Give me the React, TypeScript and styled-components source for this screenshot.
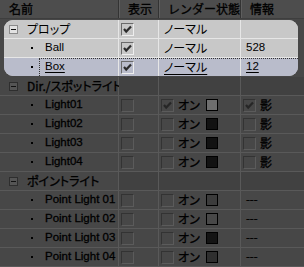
import styled, { createGlobalStyle } from 'styled-components';

const GlobalStyle = createGlobalStyle`
  html, body { margin: 0; padding: 0; background: #474747; }
  body {
    font-family: "Noto Sans CJK JP", "Liberation Sans", sans-serif;
    font-size: 11px;
    color: #000;
  }
`;

type Tone = 'light' | 'selected' | 'dark' | 'group';

const Sheet = styled.div`
  width: 304px;
  height: 267px;
  overflow: hidden;
  background: #474747;
  color: #000;
  font-family: "Noto Sans CJK JP", "Liberation Sans", sans-serif;
  font-size: 11px;
`;

const HeaderRow = styled.div`
  display: grid;
  grid-template-columns: 119px 40px 82px 1fr;
  height: 18px;
  background: #4d4d4d;
  border-bottom: 1px solid #3e3e3e;
`;

const HeaderCell = styled.div`
  display: flex;
  align-items: center;
  padding-left: 9px;
  line-height: 1;
  font-size: 12px;
  white-space: nowrap;
  -webkit-text-stroke: 0.3px #000;
  border-right: 1px solid #333;
  box-shadow: 1px 0 0 #5e5e5e;
  &:last-child { border-right: none; box-shadow: none; }
`;

const Panel = styled.div`
  margin: 1px 6px 1px 4px;
  border-radius: 9px;
  overflow: hidden;
  background: #c8c8c8;
`;

const Row = styled.div<{ $tone: Tone }>`
  position: relative;
  display: grid;
  grid-template-columns: ${({ $tone }) => ($tone === 'light' || $tone === 'selected' ? '115px' : '119px')} 40px 82px 1fr;
  height: 18px;
  background: ${({ $tone }) => ($tone === 'selected' ? '#b9bccb' : $tone === 'light' ? '#c8c8c8' : '#474747')};
  border-bottom: 1px solid ${({ $tone }) => ($tone === 'light' || $tone === 'selected' ? '#e6e6e6' : '#595959')};
  -webkit-text-stroke: ${({ $tone }) => ($tone === 'dark' || $tone === 'group' ? '0.3px #000' : '0')};
  &:last-child { border-bottom: ${({ $tone }) => ($tone === 'selected' ? 'none' : undefined)}; }

  ${({ $tone }) =>
    $tone === 'selected' &&
    `
    &::before {
      content: '';
      position: absolute;
      left: 35px;
      top: 0;
      right: 0;
      bottom: 0;
      border-top: 1px dotted #333;
      border-left: 1px dotted #333;
      pointer-events: none;
    }
  `}
`;

const Cell = styled.div<{ $pad?: number; $line: string; $shade?: boolean }>`
  display: flex;
  align-items: center;
  gap: 4px;
  min-width: 0;
  padding-left: ${({ $pad }) => $pad ?? 0}px;
  border-right: 1px solid ${({ $line }) => $line};
  background: ${({ $shade }) => ($shade ? '#414141' : 'transparent')};
  white-space: nowrap;
  line-height: 1;
  &:last-child { border-right: none; }
`;

const Label = styled.span<{ $under?: boolean }>`
  font-size: 12px;
  font-feature-settings: "palt";
  text-decoration: ${({ $under }) => ($under ? 'underline' : 'none')};
  text-underline-offset: 2px;
`;

const Latin = styled.span<{ $under?: boolean }>`
  font-family: "Liberation Sans", sans-serif;
  font-size: 11.5px;
  text-decoration: ${({ $under }) => ($under ? 'underline' : 'none')};
  text-underline-offset: 2px;
`;

const Expander = styled.span<{ $dark?: boolean }>`
  position: relative;
  box-sizing: border-box;
  flex: none;
  width: 9px;
  height: 9px;
  margin-right: 5px;
  border: 1px solid ${({ $dark }) => ($dark ? '#2e2e2e' : '#8a8a8a')};
  background: ${({ $dark }) => ($dark ? '#555' : '#e2e2e2')};
  &::after {
    content: '';
    position: absolute;
    left: 1px;
    right: 1px;
    top: 3px;
    height: 1px;
    background: #111;
  }
`;

const Bullet = styled.span`
  flex: none;
  width: 2px;
  height: 2px;
  background: #000;
  margin-right: 8px;
`;

const Box = styled.span<{ $dark?: boolean }>`
  box-sizing: border-box;
  width: 13px;
  height: 13px;
  flex: none;
  border-style: solid;
  border-width: 1px;
  border-color: ${({ $dark }) => ($dark ? '#333 #5b5b5b #5b5b5b #333' : '#6a6a6a #eee #eee #6a6a6a')};
  display: flex;
  align-items: center;
  justify-content: center;
`;

const Swatch = styled.span<{ $fill: string }>`
  box-sizing: border-box;
  flex: none;
  width: 12px;
  height: 12px;
  margin-left: 2px;
  border: 1px solid #000;
  background: ${({ $fill }) => $fill};
`;

const Check = ({ on, dark }: { on: boolean; dark?: boolean }) => (
  <Box $dark={dark}>
    {on && (
      <svg width="11" height="11" viewBox="0 0 11 11">
        <path d="M2 5 L4.2 7.5 L9 2.5" fill="none" stroke={dark ? '#262626' : '#2c2c2c'} strokeWidth="2.2" />
      </svg>
    )}
  </Box>
);

const lightLine = '#e6e6e6';
const darkLine = '#595959';

type Light = { name: string; on: boolean; swatch: string; shadow?: boolean };

const dirLights: Light[] = [
  { name: 'Light01', on: true, swatch: '#6e6e6e', shadow: true },
  { name: 'Light02', on: false, swatch: '#121212', shadow: false },
  { name: 'Light03', on: false, swatch: '#121212', shadow: false },
  { name: 'Light04', on: false, swatch: '#121212', shadow: false },
];

const pointLights: Light[] = [
  { name: 'Point Light 01', on: false, swatch: '#3c3c3c' },
  { name: 'Point Light 02', on: false, swatch: '#484848' },
  { name: 'Point Light 03', on: false, swatch: '#141414' },
  { name: 'Point Light 04', on: false, swatch: '#2f2f2f' },
];

const GroupRow = ({ title }: { title: string }) => (
  <Row $tone="group">
    <Cell $pad={9} $line={darkLine}>
      <Expander $dark />
      <Label>{title}</Label>
    </Cell>
    <Cell $line={darkLine} $shade />
    <Cell $line={darkLine} $shade />
    <Cell $line={darkLine} $shade />
  </Row>
);

const LightRow = ({ light }: { light: Light }) => (
  <Row $tone="dark">
    <Cell $pad={31} $line={darkLine}>
      <Bullet />
      <Latin>{light.name}</Latin>
    </Cell>
    <Cell $pad={2} $line={darkLine}>
      <Check on={false} dark />
    </Cell>
    <Cell $pad={2} $line={darkLine}>
      <Check on={light.on} dark />
      <Label>オン</Label>
      <Swatch $fill={light.swatch} />
    </Cell>
    <Cell $pad={light.shadow === undefined ? 5 : 2} $line={darkLine}>
      {light.shadow === undefined ? (
        <Latin>---</Latin>
      ) : (
        <>
          <Check on={light.shadow} dark />
          <Label>影</Label>
        </>
      )}
    </Cell>
  </Row>
);

export default function App() {
  return (
    <>
      <GlobalStyle />
      <Sheet>
        <HeaderRow>
          <HeaderCell>名前</HeaderCell>
          <HeaderCell>表示</HeaderCell>
          <HeaderCell>レンダー状態</HeaderCell>
          <HeaderCell>情報</HeaderCell>
        </HeaderRow>

        <Panel>
          <Row $tone="light">
            <Cell $pad={5} $line={lightLine}>
              <Expander />
              <Label>プロップ</Label>
            </Cell>
            <Cell $pad={2} $line={lightLine}>
              <Check on />
            </Cell>
            <Cell $pad={5} $line={lightLine}>
              <Label>ノーマル</Label>
            </Cell>
            <Cell $line={lightLine} />
          </Row>
          <Row $tone="light">
            <Cell $pad={27} $line={lightLine}>
              <Bullet />
              <Latin>Ball</Latin>
            </Cell>
            <Cell $pad={2} $line={lightLine}>
              <Check on />
            </Cell>
            <Cell $pad={5} $line={lightLine}>
              <Label>ノーマル</Label>
            </Cell>
            <Cell $pad={5} $line={lightLine}>
              <Latin>528</Latin>
            </Cell>
          </Row>
          <Row $tone="selected">
            <Cell $pad={27} $line={lightLine}>
              <Bullet />
              <Latin $under>Box</Latin>
            </Cell>
            <Cell $pad={2} $line={lightLine}>
              <Check on />
            </Cell>
            <Cell $pad={5} $line={lightLine}>
              <Label $under>ノーマル</Label>
            </Cell>
            <Cell $pad={5} $line={lightLine}>
              <Latin $under>12</Latin>
            </Cell>
          </Row>
        </Panel>

        <GroupRow title="Dir./スポットライト" />
        {dirLights.map((l) => (
          <LightRow key={l.name} light={l} />
        ))}
        <GroupRow title="ポイントライト" />
        {pointLights.map((l) => (
          <LightRow key={l.name} light={l} />
        ))}
      </Sheet>
    </>
  );
}
